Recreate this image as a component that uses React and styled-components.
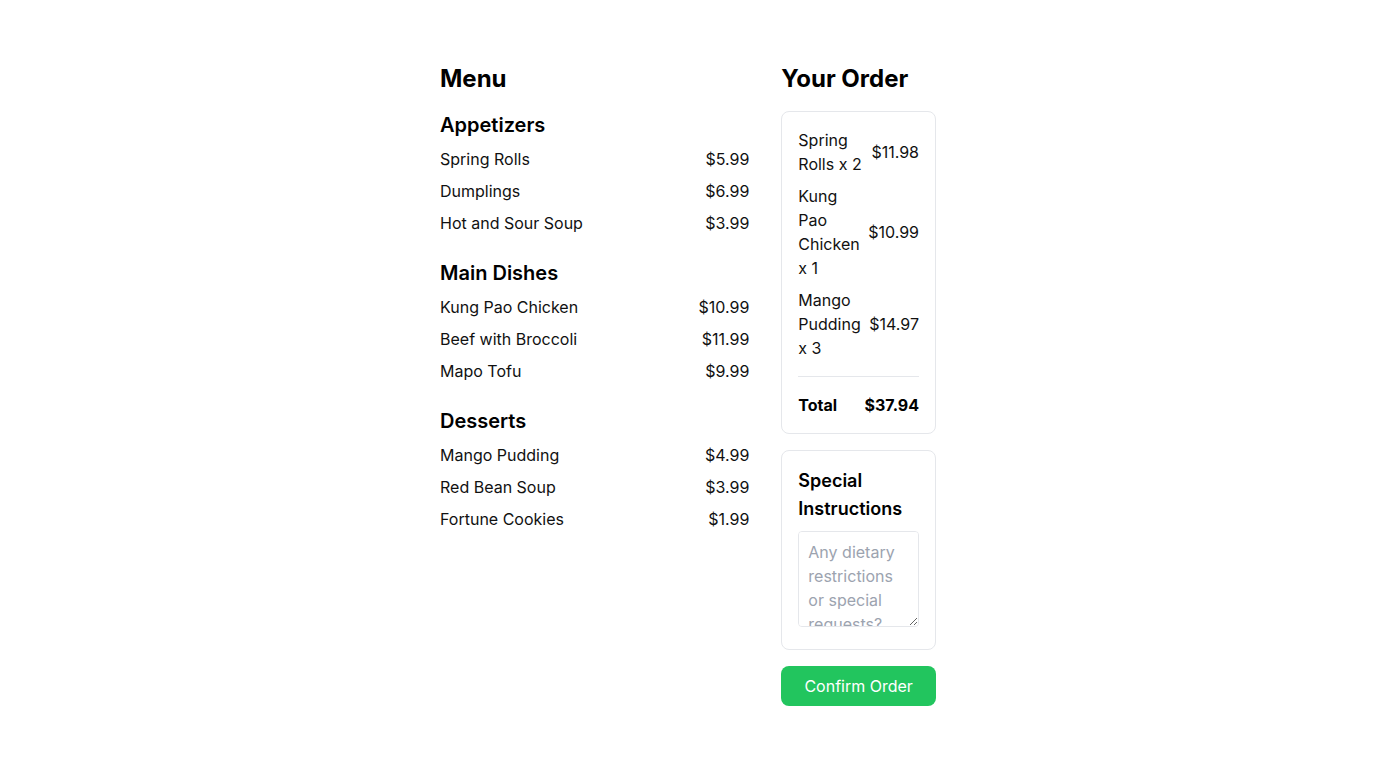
import React from 'react';
import styled, { createGlobalStyle } from 'styled-components';

const GlobalStyle = createGlobalStyle`
  body {
    margin: 0;
    background: #ffffff;
    font-family: Inter, "Liberation Sans", sans-serif;
    color: #111111;
  }
  * {
    box-sizing: border-box;
  }
`;

const Page = styled.div`
  width: 496px;
  margin: 0 auto;
  padding: 63px 0;
  display: grid;
  grid-template-columns: 2fr 1fr;
  gap: 32px;
  align-items: start;
`;

const Column = styled.div`
  display: flex;
  flex-direction: column;
  gap: ${(p) => p.$gap || 0}px;
`;

const Title = styled.h2`
  margin: 0 0 16px;
  font-size: 24px;
  line-height: 32px;
  font-weight: 700;
  color: #000;
`;

const Section = styled.section`
  & + & {
    margin-top: 24px;
  }
`;

const SectionTitle = styled.h3`
  margin: 0 0 8px;
  font-size: 20px;
  line-height: 28px;
  font-weight: 600;
  color: #000;
`;

const ItemList = styled.ul`
  list-style: none;
  margin: 0;
  padding: 0;
  display: flex;
  flex-direction: column;
  gap: 8px;
`;

const Row = styled.li`
  display: flex;
  justify-content: space-between;
  align-items: center;
  gap: 8px;
  font-size: 16px;
  line-height: 24px;
`;

const Price = styled.span`
  white-space: nowrap;
  flex-shrink: 0;
`;

const Card = styled.div`
  border: 1px solid #e5e7eb;
  border-radius: 8px;
  padding: 16px;
  background: #fff;
`;

const OrderList = styled.ul`
  list-style: none;
  margin: 0;
  padding: 0;
  display: flex;
  flex-direction: column;
  gap: 8px;
`;

const TotalRow = styled.div`
  margin-top: 16px;
  padding-top: 16px;
  border-top: 1px solid #e5e7eb;
  display: flex;
  justify-content: space-between;
  font-size: 16px;
  line-height: 24px;
  font-weight: 700;
  color: #000;
`;

const CardTitle = styled.h3`
  margin: 0 0 8px;
  font-size: 18px;
  line-height: 28px;
  font-weight: 600;
  color: #000;
`;

const Notes = styled.textarea`
  display: block;
  width: 100%;
  height: 96px;
  margin-bottom: 6px;
  padding: 8px 9px;
  border: 1px solid #e5e7eb;
  border-radius: 4px;
  font-family: Inter, "Liberation Sans", sans-serif;
  font-size: 16px;
  line-height: 24px;
  color: #111;
  outline: none;

  &::placeholder {
    color: #9ca3af;
  }
`;

const ConfirmButton = styled.button`
  width: 100%;
  height: 40px;
  border: none;
  border-radius: 8px;
  background: #22c55e;
  color: #fff;
  font-family: Inter, "Liberation Sans", sans-serif;
  font-size: 16px;
  line-height: 24px;
  cursor: pointer;
`;

const menu = [
  {
    name: 'Appetizers',
    items: [
      ['Spring Rolls', 5.99],
      ['Dumplings', 6.99],
      ['Hot and Sour Soup', 3.99],
    ],
  },
  {
    name: 'Main Dishes',
    items: [
      ['Kung Pao Chicken', 10.99],
      ['Beef with Broccoli', 11.99],
      ['Mapo Tofu', 9.99],
    ],
  },
  {
    name: 'Desserts',
    items: [
      ['Mango Pudding', 4.99],
      ['Red Bean Soup', 3.99],
      ['Fortune Cookies', 1.99],
    ],
  },
];

const order = [
  ['Spring Rolls', 5.99, 2],
  ['Kung Pao Chicken', 10.99, 1],
  ['Mango Pudding', 4.99, 3],
];

const money = (n) => `$${n.toFixed(2)}`;

export default function App() {
  const total = order.reduce((sum, [, price, qty]) => sum + price * qty, 0);

  return (
    <>
      <GlobalStyle />
      <Page>
        <div>
          <Title>Menu</Title>
          {menu.map((section) => (
            <Section key={section.name}>
              <SectionTitle>{section.name}</SectionTitle>
              <ItemList>
                {section.items.map(([name, price]) => (
                  <Row key={name}>
                    <span>{name}</span>
                    <Price>{money(price)}</Price>
                  </Row>
                ))}
              </ItemList>
            </Section>
          ))}
        </div>

        <div>
          <Title>Your Order</Title>
          <Column $gap={16}>
            <Card>
              <OrderList>
                {order.map(([name, price, qty]) => (
                  <Row key={name}>
                    <span>
                      {name} x {qty}
                    </span>
                    <Price>{money(price * qty)}</Price>
                  </Row>
                ))}
              </OrderList>
              <TotalRow>
                <span>Total</span>
                <span>{money(total)}</span>
              </TotalRow>
            </Card>
            <Card>
              <CardTitle>Special Instructions</CardTitle>
              <Notes placeholder="Any dietary restrictions or special requests?" />
            </Card>
            <ConfirmButton>Confirm Order</ConfirmButton>
          </Column>
        </div>
      </Page>
    </>
  );
}
